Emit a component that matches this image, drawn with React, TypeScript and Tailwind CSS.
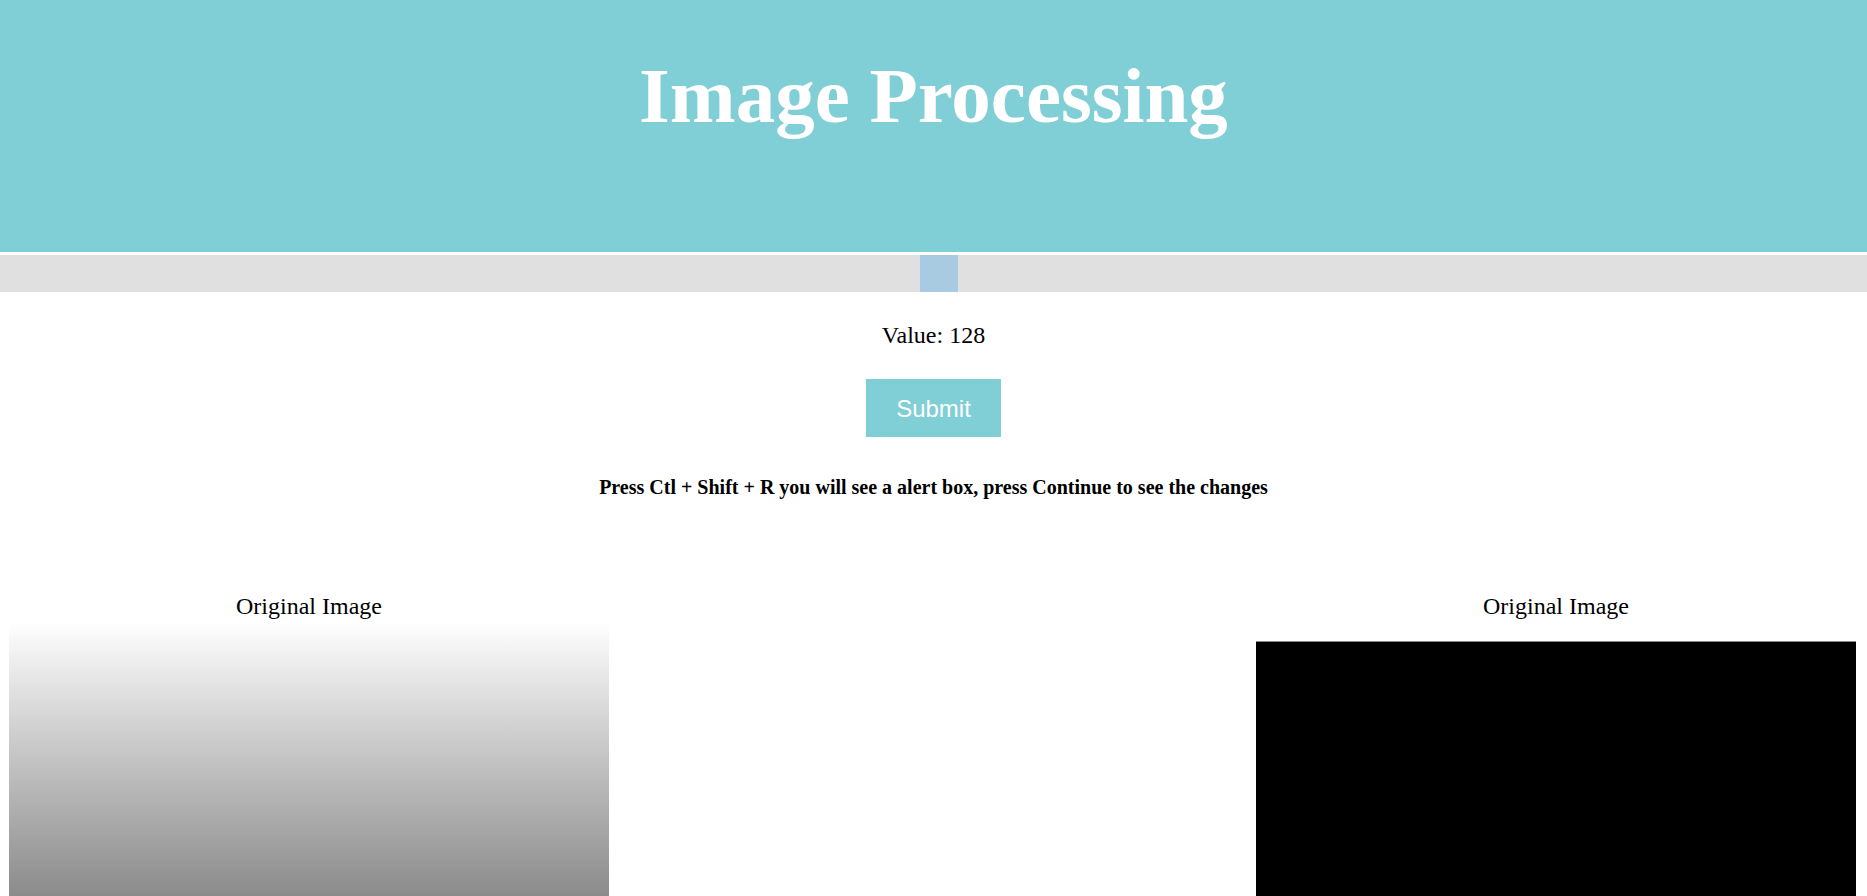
import React from "react";

export default function App() {
  const value = 128;
  return (
    <div className="min-h-[896px] bg-white text-black" style={{ fontFamily: '"Liberation Serif", "Times New Roman", serif' }}>
      <header className="h-[252px] bg-[#80ced6] pt-[52px]">
        <h1 className="text-center text-[79px] leading-[87px] font-bold text-white">Image Processing</h1>
      </header>
      <div className="relative mt-[3px] h-[37px] bg-[#e0e0e0]">
        <div className="absolute top-0 left-[920px] h-[37px] w-[38px] bg-[#a8cbe1]" />
      </div>
      <p className="mt-[30px] text-center text-[24px] leading-[27px]">Value: {value}</p>
      <div className="mt-[30px] flex justify-center">
        <button
          className="flex h-[58px] w-[135px] items-center justify-center bg-[#80ced6] text-[24px] leading-[27px] text-white"
          style={{ fontFamily: '"Liberation Sans", Arial, sans-serif' }}
        >
          Submit
        </button>
      </div>
      <p className="mt-[39px] text-center text-[20px] font-bold leading-[22px]">
        Press Ctl + Shift + R you will see a alert box, press Continue to see the changes
      </p>
      <div className="mt-[95px] flex justify-between pl-[9px] pr-[11px]">
        <div className="flex w-[600px] flex-col items-center">
          <div className="text-[24px] leading-[27px]">Original Image</div>
          <div className="mt-[2px] h-[400px] w-[600px] bg-gradient-to-b from-[#ffffff] to-[#5b5b5b]" />
        </div>
        <div className="flex w-[600px] flex-col items-center">
          <div className="text-[24px] leading-[27px]">Original Image</div>
          <div className="mt-[21px] h-[400px] w-[600px] border-t border-[#8a8a8a] bg-black" />
        </div>
      </div>
    </div>
  );
}
